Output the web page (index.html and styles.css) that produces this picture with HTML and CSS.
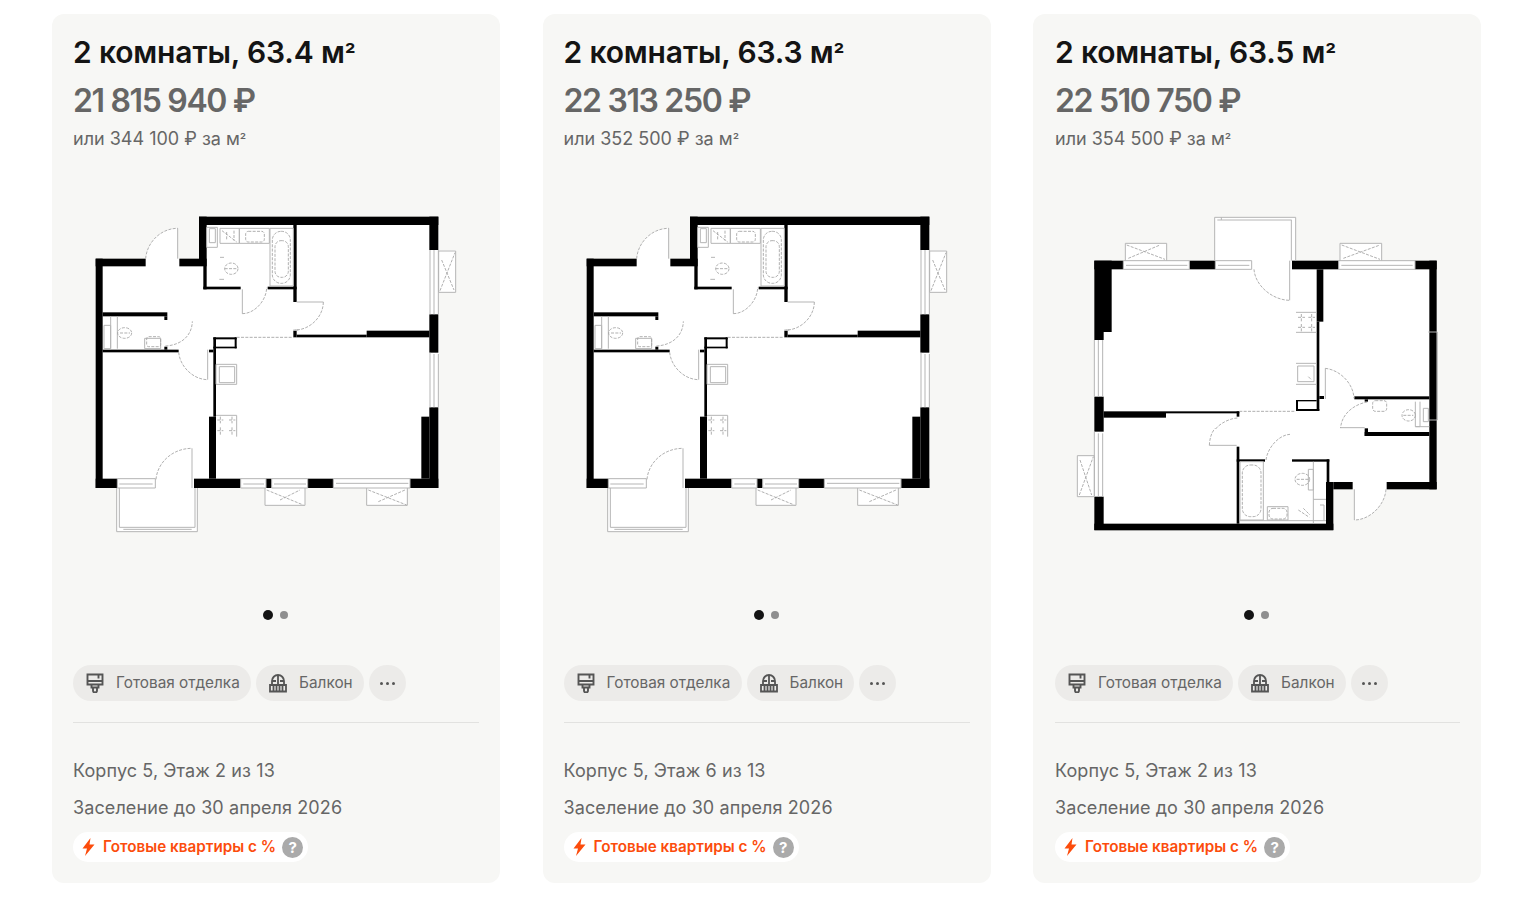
FILE: index.html
```html
<!DOCTYPE html>
<html lang="ru">
<head>
    <meta charset="UTF-8">
    <title>Квартиры</title>
    <link rel="stylesheet" href="styles.css">
</head>
<body>
    <!-- общие иконки и планировки -->
    <svg class="defs" width="0" height="0">
        <symbol id="icon-brush" viewBox="0 0 18 20">
            <path d="M1.500 1.500h15v10h-15zM1.500 8h15M12.500 1.500v4M5.500 11.500v3h7v-3M7 14.500v3a2 2 0 0 0 4 0v-3" fill="none" stroke="currentColor" stroke-width="1.900"/>
        </symbol>
        <symbol id="icon-balcony" viewBox="0 0 18 20">
            <path d="M3 12V8a6 6 0 0 1 12 0v4M9 2v10M3 8h4M11 8h4M1 12h16v6.500H1zM4.500 12v6.500M7.500 12v6.500M10.500 12v6.500M13.500 12v6.500" fill="none" stroke="currentColor" stroke-width="1.800"/>
        </symbol>
        <symbol id="icon-bolt" viewBox="0 0 13 18">
            <path d="M8.500 0 0.500 10.500h4.500L3 18l9.500-11.500H7.500z" fill="currentColor"/>
        </symbol>

        <!-- планировка 2 комнаты, первая -->
        <symbol id="plan-a" viewBox="0 0 1170 1020">
            <path class="room" d="M47 176H197C200 130 240 85 293 85V176H357V50H1075V150H1127V277H1075V864H982V916H860V864H675V916H555V864H352V995H110V864H47Z"/>
            <g class="wall">
                <rect x="357" y="50" width="718" height="25"/>
                <rect x="357" y="50" width="23" height="148"/>
                <rect x="47" y="176" width="150" height="23"/>
                <rect x="298" y="176" width="82" height="23"/>
                <rect x="47" y="176" width="21" height="688"/>
                <rect x="47" y="836" width="65" height="28"/>
                <rect x="342" y="836" width="140" height="28"/>
                <rect x="558" y="836" width="17" height="28"/>
                <rect x="683" y="836" width="77" height="28"/>
                <rect x="990" y="836" width="85" height="28"/>
                <rect x="1048" y="50" width="27" height="100"/>
                <rect x="1048" y="343" width="27" height="115"/>
                <rect x="1048" y="622" width="27" height="242"/>
                <rect x="1024" y="650" width="24" height="186"/>
                <rect x="370" y="198" width="10" height="70"/>
                <rect x="370" y="260" width="112" height="8"/>
                <rect x="563" y="260" width="87" height="8"/>
                <rect x="640" y="75" width="10" height="231"/>
                <rect x="640" y="392" width="10" height="20"/>
                <rect x="650" y="404" width="210" height="8"/>
                <rect x="860" y="392" width="188" height="20"/>
                <rect x="68" y="337" width="194" height="12"/>
                <rect x="253" y="349" width="9" height="11"/>
                <rect x="68" y="449" width="228" height="8"/>
                <rect x="253" y="440" width="9" height="9"/>
                <rect x="400" y="412" width="8" height="238"/>
                <rect x="387" y="650" width="21" height="186"/>
                <rect x="387" y="449" width="13" height="8"/>
                <rect x="400" y="412" width="70" height="6"/>
                <rect x="464" y="412" width="6" height="33"/>
                <rect x="400" y="440" width="70" height="5"/>
            </g>
            <g class="line">
                <!-- окна и балкон -->
                <path d="M1050 150V343M1062 150V343M1075 150V343M1050 458V622M1062 462V622M1075 462V622"/>
                <path d="M1076 153H1127V277H1076Z"/>
                <path d="M112 836H226V864H112ZM118 852H218"/>
                <path d="M482 836H558V864H482ZM490 852H552M575 836H683V864H575ZM582 852H678M760 836H990V864H760ZM768 850H985"/>
                <path d="M555 864V916H675V864M860 864V916H982V864"/>
                <path d="M110 864V995H352V864M118 864V982H345V864M130 988H335"/>
                <!-- двери -->
                <path d="M293 85V176M487 268V341M730 306H650M383 449V539M336 745V864M640 390H655"/>
                <!-- сантехника -->
                <path d="M380 82H412V142H380ZM388 86H406V128H388ZM420 85H478V130H420ZM478 85H568V130H478ZM420 172H432M418 238H432"/>
                <path d="M570 85H640V258H570Z"/>
                <path d="M72 376H92V446H72ZM92 349V446M112 349V446M194 415H242V446H194Z"/>
                <path d="M408 493H470V553H408ZM418 500H464V548H418ZM408 646H470V710"/>
            </g>
            <g class="dash">
                <path d="M197 176C200 130 240 85 293 85M487 341C525 341 560 300 560 262M730 306C730 350 690 390 645 390M256 438C300 436 336 410 337 364M296 457C300 500 340 539 383 539M228 838C232 790 275 745 336 745M470 412H640"/>
                <rect x="577" y="94" width="54" height="156" rx="26"/>
                <rect x="585" y="122" width="40" height="110" rx="18"/>
                <rect x="497" y="94" width="56" height="32" rx="8"/>
                <rect x="200" y="410" width="42" height="30" rx="6"/>
                <ellipse cx="454" cy="206" rx="20" ry="17"/>
                <ellipse cx="134" cy="399" rx="21" ry="16"/>
                <path d="M434 206H470M120 399H150M426 92L470 126M440 96V122M462 92V122M560 870L670 915M600 900L660 870M865 870L980 915M895 905L975 870M1080 272L1125 158M1085 180L1122 270"/>
                <path d="M412 660H430M447 660H466M412 692H430M447 692H466M421 650V670M456 650V670M421 682V704M456 682V704"/>
            </g>
        </symbol>

        <!-- планировка 2 комнаты, вторая -->
        <symbol id="plan-b" viewBox="0 0 1170 1020">
            <path class="room" d="M103 182H196V130H320V182H464V52H707V182H840V130H965V182H1130V868H980C976 915 930 960 883 960V868H820V990H103V890H52V767H103Z"/>
            <g class="wall">
                <rect x="103" y="182" width="87" height="26"/>
                <rect x="388" y="182" width="78" height="26"/>
                <rect x="696" y="182" width="140" height="26"/>
                <rect x="1065" y="182" width="65" height="26"/>
                <rect x="103" y="182" width="52" height="214"/>
                <rect x="103" y="396" width="28" height="24"/>
                <rect x="103" y="590" width="28" height="105"/>
                <rect x="103" y="890" width="28" height="100"/>
                <rect x="103" y="971" width="717" height="20"/>
                <rect x="1108" y="182" width="22" height="686"/>
                <rect x="980" y="846" width="150" height="22"/>
                <rect x="820" y="846" width="58" height="22"/>
                <rect x="798" y="846" width="22" height="144"/>
                <rect x="800" y="778" width="8" height="68"/>
                <rect x="696" y="778" width="112" height="7"/>
                <rect x="530" y="740" width="8" height="231"/>
                <rect x="530" y="778" width="85" height="7"/>
                <rect x="131" y="634" width="187" height="19"/>
                <rect x="318" y="634" width="220" height="6"/>
                <rect x="530" y="634" width="8" height="16"/>
                <rect x="770" y="208" width="20" height="157"/>
                <rect x="770" y="365" width="8" height="267"/>
                <rect x="708" y="627" width="70" height="6"/>
                <rect x="708" y="600" width="6" height="33"/>
                <rect x="708" y="600" width="62" height="4"/>
                <rect x="778" y="588" width="14" height="9"/>
                <rect x="883" y="589" width="225" height="9"/>
                <rect x="914" y="598" width="10" height="7"/>
                <rect x="914" y="685" width="10" height="23"/>
                <rect x="914" y="696" width="194" height="12"/>
            </g>
            <g class="line">
                <!-- окна и балкон -->
                <path d="M190 182H388V208H190ZM198 196H382M466 182H575V208H466ZM474 196H568M836 182H1065V208H836ZM844 196H1058"/>
                <path d="M196 182V130H320V182M840 182V130H965V182M464 182V52H707V182M484 52V60M472 60H695M694 60V182"/>
                <path d="M103 420V590M115 420V590M128 420V590M103 695V890M115 700V890M128 700V890M52 767H103V890H52Z"/>
                <!-- двери -->
                <path d="M689 182V301M796 505V597M840 683H914M448 736H530M883 868V960M1105 396H1132V660H1105"/>
                <!-- кухня и сантехника -->
                <path d="M708 337H770M708 397H770M708 490H770M708 553H770M713 498H762V545H713Z"/>
                <path d="M1066 605V680H1080V605M1090 625H1105V665H1090ZM1066 680H1108"/>
                <path d="M540 785H610V960H540ZM540 962H798M622 920H684V960H622ZM760 785V970M745 808H760V870H745ZM760 898H798M780 915H792V962"/>
            </g>
            <g class="dash">
                <path d="M582 208C585 255 635 300 689 301M796 505C840 510 880 550 882 595M922 606C885 612 845 640 842 683M532 654C500 656 468 680 466 690M448 736C449 715 455 695 466 685M618 780C622 745 655 705 690 703M978 868C975 915 930 960 883 960M538 634H706"/>
                <rect x="547" y="795" width="56" height="155" rx="24"/>
                <rect x="627" y="925" width="54" height="32" rx="12"/>
                <rect x="938" y="602" width="42" height="32" rx="8"/>
                <ellipse cx="727" cy="838" rx="22" ry="18"/>
                <ellipse cx="1046" cy="646" rx="20" ry="17"/>
                <path d="M710 838H745M1030 646H1060M715 930L748 952M730 925L750 945M745 530L755 540"/>
                <path d="M200 135L315 178M205 175L300 135M845 135L960 178M850 175L960 135M58 885L100 770M60 780L95 885"/>
                <path d="M714 352H735M745 352H765M714 382H735M745 382H765M724 342V364M755 342V364M724 372V394M755 372V394"/>
            </g>
        </symbol>
    </svg>

    <main class="cards">
        <article class="card">
            <h2 class="card-title">2 комнаты, 63.4 м<span class="sq">²</span></h2>
            <div class="card-price">21 815 940 ₽</div>
            <div class="card-meter">или 344 100 ₽ за м<span class="sq">²</span></div>
            <svg class="plan" width="390" height="340"><use href="#plan-a"/></svg>
            <div class="dots"><span class="dot dot-active"></span><span class="dot"></span></div>
            <div class="chips">
                <span class="chip"><svg class="chip-icon"><use href="#icon-brush"/></svg>Готовая отделка</span>
                <span class="chip"><svg class="chip-icon"><use href="#icon-balcony"/></svg>Балкон</span>
                <span class="chip chip-more"><i></i><i></i><i></i></span>
            </div>
            <div class="card-info">Корпус 5, Этаж 2 из 13</div>
            <div class="card-info">Заселение до 30 апреля 2026</div>
            <div class="promo"><svg class="promo-icon"><use href="#icon-bolt"/></svg>Готовые квартиры с %<span class="promo-help">?</span></div>
        </article>

        <article class="card">
            <h2 class="card-title">2 комнаты, 63.3 м<span class="sq">²</span></h2>
            <div class="card-price">22 313 250 ₽</div>
            <div class="card-meter">или 352 500 ₽ за м<span class="sq">²</span></div>
            <svg class="plan" width="390" height="340"><use href="#plan-a"/></svg>
            <div class="dots"><span class="dot dot-active"></span><span class="dot"></span></div>
            <div class="chips">
                <span class="chip"><svg class="chip-icon"><use href="#icon-brush"/></svg>Готовая отделка</span>
                <span class="chip"><svg class="chip-icon"><use href="#icon-balcony"/></svg>Балкон</span>
                <span class="chip chip-more"><i></i><i></i><i></i></span>
            </div>
            <div class="card-info">Корпус 5, Этаж 6 из 13</div>
            <div class="card-info">Заселение до 30 апреля 2026</div>
            <div class="promo"><svg class="promo-icon"><use href="#icon-bolt"/></svg>Готовые квартиры с %<span class="promo-help">?</span></div>
        </article>

        <article class="card">
            <h2 class="card-title">2 комнаты, 63.5 м<span class="sq">²</span></h2>
            <div class="card-price">22 510 750 ₽</div>
            <div class="card-meter">или 354 500 ₽ за м<span class="sq">²</span></div>
            <svg class="plan" width="390" height="340"><use href="#plan-b"/></svg>
            <div class="dots"><span class="dot dot-active"></span><span class="dot"></span></div>
            <div class="chips">
                <span class="chip"><svg class="chip-icon"><use href="#icon-brush"/></svg>Готовая отделка</span>
                <span class="chip"><svg class="chip-icon"><use href="#icon-balcony"/></svg>Балкон</span>
                <span class="chip chip-more"><i></i><i></i><i></i></span>
            </div>
            <div class="card-info">Корпус 5, Этаж 2 из 13</div>
            <div class="card-info">Заселение до 30 апреля 2026</div>
            <div class="promo"><svg class="promo-icon"><use href="#icon-bolt"/></svg>Готовые квартиры с %<span class="promo-help">?</span></div>
        </article>
    </main>
</body>
</html>
```

FILE: styles.css
```css
body {
    margin: 0;
    background-color: #fff;
    font-family: Inter, "Noto Sans", sans-serif;
    color: #666;
}

.defs {
    display: block;
    height: 0;
}

.cards {
    display: grid;
    grid-template-columns: repeat(3, 448px);
    column-gap: 42.5px;
    padding: 14px 0 0 52px;
}

.card {
    display: flex;
    flex-direction: column;
    height: 869px;
    box-sizing: border-box;
    padding: 20px 21px 0;
    background-color: #f7f7f5;
    border-radius: 12px;
}

.card:last-child {
    padding-left: 22px;
    padding-right: 21px;
}

.card-title {
    margin: 0;
    font-size: 30px;
    line-height: 36px;
    font-weight: 600;
    letter-spacing: -0.15px;
    color: #141414;
}

.sq {
    font-size: 0.8em;
    line-height: 0;
}

.card-price {
    margin-top: 13px;
    font-size: 32px;
    line-height: 36px;
    font-weight: 600;
    letter-spacing: -1.35px;
    color: #666;
}

.card-meter {
    margin-top: 8px;
    font-size: 18px;
    line-height: 24px;
}

.plan {
    display: block;
    margin: 49px 0 0 7px;
}

.card:last-child .plan {
    margin-left: 5px;
}

.room {
    fill: #fff;
}

.wall {
    fill: #000;
}

.line {
    fill: none;
    stroke: #b5b5b5;
    stroke-width: 3;
}

.dash {
    fill: none;
    stroke: #a0a0a0;
    stroke-width: 2.5;
    stroke-dasharray: 9 4;
}

.dots {
    display: flex;
    align-items: center;
    justify-content: center;
    gap: 7px;
    height: 10px;
    margin-top: 70px;
    padding-right: 1px;
}

.card:last-child .dots {
    padding-right: 3px;
}

.dot {
    width: 8px;
    height: 8px;
    border-radius: 50%;
    background-color: #8f8f8f;
}

.dot-active {
    width: 10px;
    height: 10px;
    background-color: #141414;
}

.chips {
    display: flex;
    gap: 5px;
    margin-top: 45px;
    padding-bottom: 21px;
    border-bottom: 1px solid #e2e2e0;
}

.chip {
    display: flex;
    align-items: center;
    box-sizing: border-box;
    height: 36px;
    padding: 0 11.3px 2px 13px;
    border-radius: 18px;
    background-color: #ecebe9;
    font-size: 15.35px;
}

.chip-icon {
    width: 18px;
    height: 20px;
    margin: 2px 12px 0 0;
    color: #555;
}

.chip-more {
    gap: 3px;
    width: 37px;
    padding: 0;
    justify-content: center;
}

.chip-more i {
    width: 3px;
    height: 3px;
    border-radius: 50%;
    background-color: #555;
}

.card-info {
    margin-top: 13px;
    font-size: 18px;
    line-height: 24px;
    letter-spacing: 0.1px;
}

.chips + .card-info {
    margin-top: 36px;
}

.promo {
    display: flex;
    align-self: flex-start;
    align-items: center;
    box-sizing: border-box;
    height: 30px;
    margin-top: 12px;
    padding: 0 5px 2px 9px;
    border-radius: 15px;
    background-color: #fff;
    font-size: 15.25px;
    font-weight: 600;
    color: #fc4c0c;
}

.promo-icon {
    width: 13px;
    height: 18px;
    margin: 2px 8px 0 0;
}

.promo-help {
    display: flex;
    align-items: center;
    justify-content: center;
    width: 21px;
    height: 21px;
    margin: 2px 0 0 6px;
    border-radius: 50%;
    background-color: #aaa;
    font-size: 15px;
    font-weight: 700;
    color: #fff;
}
```
